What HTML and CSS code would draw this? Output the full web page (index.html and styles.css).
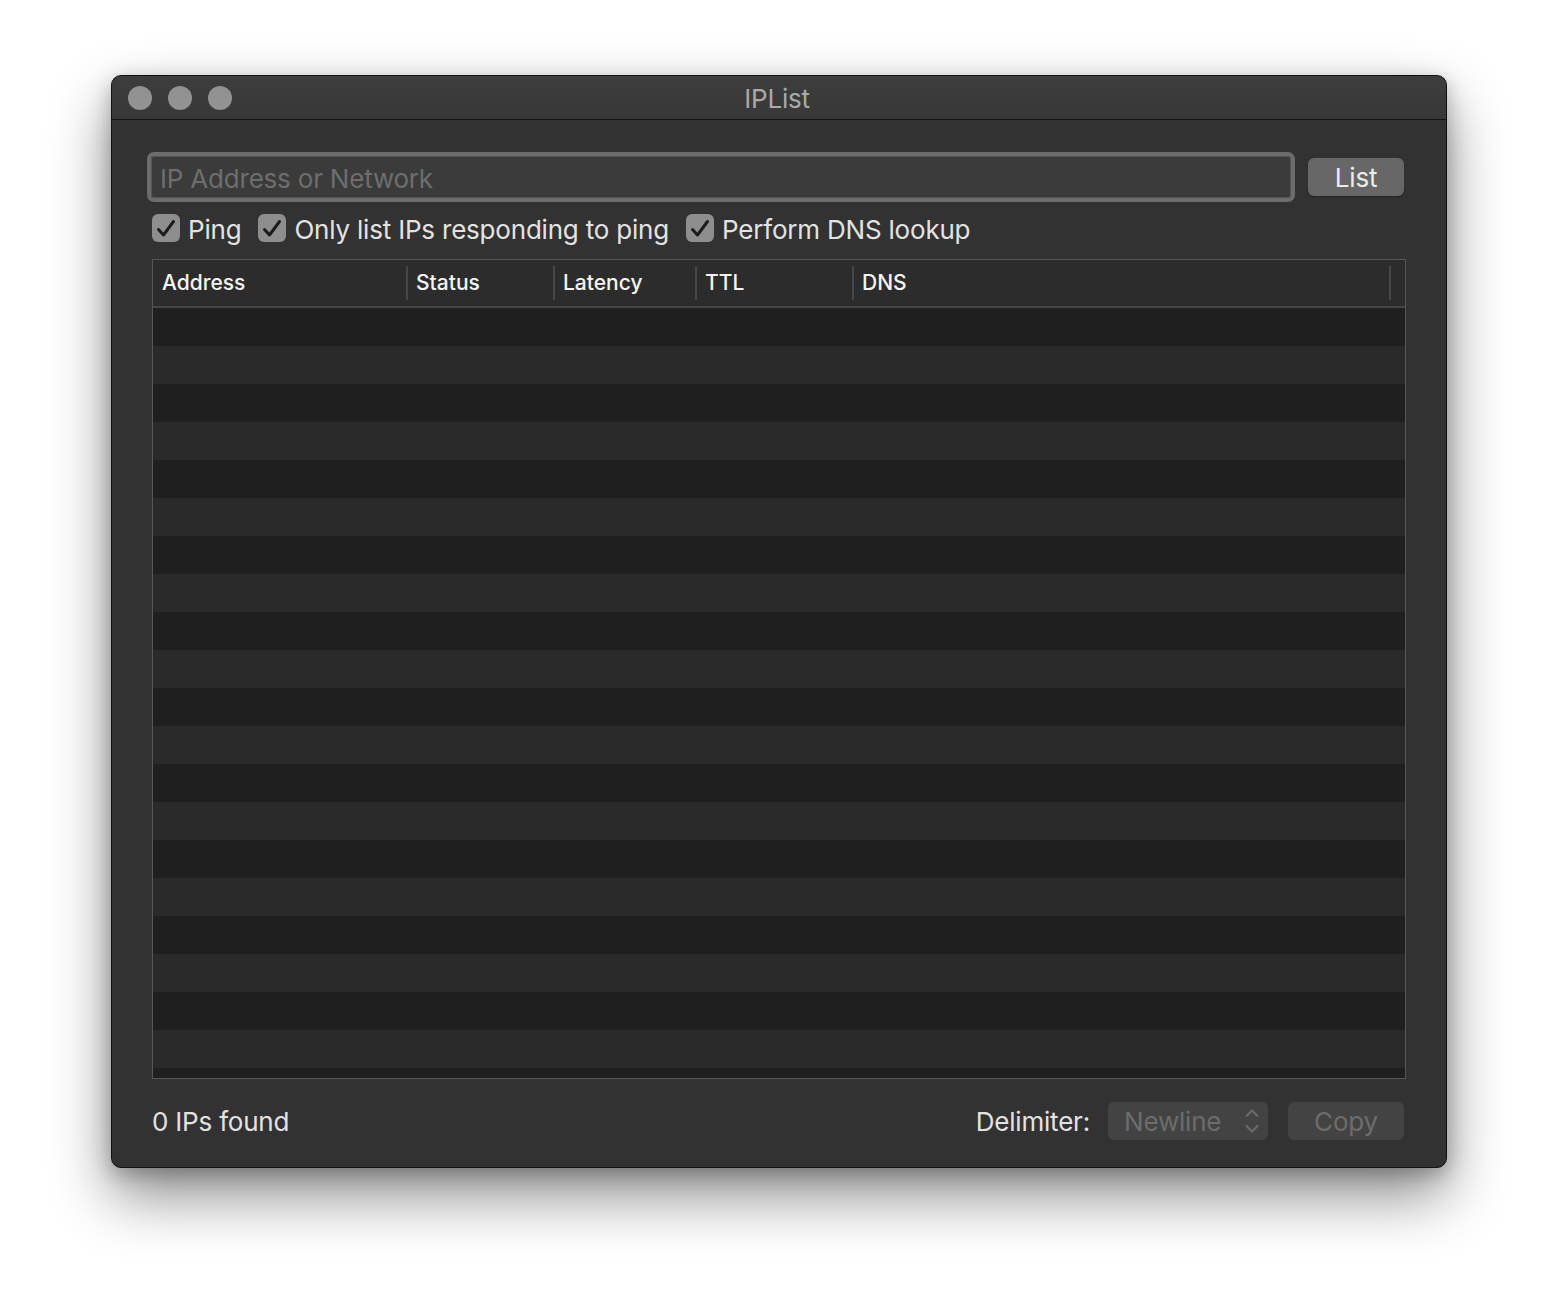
FILE: index.html
```html
<!DOCTYPE html>
<html>
<head>
<meta charset="utf-8">
<title>IPList</title>
<link rel="stylesheet" href="styles.css">
</head>
<body>
<div class="stage">
  <div class="window">
    <div class="titlebar">
      <div class="lights">
        <span class="light"></span><span class="light"></span><span class="light"></span>
      </div>
      <div class="title">IPList</div>
    </div>
    <div class="content">
      <div class="input-row">
        <div class="field"><span class="placeholder">IP Address or Network</span></div>
        <div class="btn btn-list">List</div>
      </div>
      <div class="checks">
        <label class="check"><span class="box"><svg viewBox="0 0 28 28" width="28" height="28"><path d="M6.5 15.5 L11.5 21 L21.5 7.5" fill="none" stroke="#1c1c1c" stroke-width="3" stroke-linecap="round" stroke-linejoin="round"/></svg></span><span class="label">Ping</span></label>
        <label class="check"><span class="box"><svg viewBox="0 0 28 28" width="28" height="28"><path d="M6.5 15.5 L11.5 21 L21.5 7.5" fill="none" stroke="#1c1c1c" stroke-width="3" stroke-linecap="round" stroke-linejoin="round"/></svg></span><span class="label">Only list IPs responding to ping</span></label>
        <label class="check"><span class="box"><svg viewBox="0 0 28 28" width="28" height="28"><path d="M6.5 15.5 L11.5 21 L21.5 7.5" fill="none" stroke="#1c1c1c" stroke-width="3" stroke-linecap="round" stroke-linejoin="round"/></svg></span><span class="label">Perform DNS lookup</span></label>
      </div>
      <div class="table">
        <div class="thead">
          <div class="th c-address">Address</div>
          <div class="th c-status">Status</div>
          <div class="th c-latency">Latency</div>
          <div class="th c-ttl">TTL</div>
          <div class="th c-dns">DNS</div>
          <div class="th c-end"></div>
        </div>
        <div class="tbody"></div>
      </div>
      <div class="footer">
        <div class="count">0 IPs found</div>
        <div class="footer-right">
          <span class="delim">Delimiter:</span>
          <div class="popup"><span>Newline</span>
            <svg class="chev" viewBox="0 0 16 28" width="16" height="28"><path d="M2.5 9 L8 3.5 L13.5 9" fill="none" stroke="#6a6a6a" stroke-width="2.2" stroke-linecap="round" stroke-linejoin="round"/><path d="M2.5 19 L8 24.5 L13.5 19" fill="none" stroke="#6a6a6a" stroke-width="2.2" stroke-linecap="round" stroke-linejoin="round"/></svg>
          </div>
          <div class="btn btn-copy">Copy</div>
        </div>
      </div>
    </div>
  </div>
</div>
</body>
</html>
```

FILE: styles.css
```css
html, body {
  margin: 0;
  padding: 0;
  background: #ffffff;
}
body {
  width: 1558px;
  height: 1316px;
  overflow: hidden;
  font-family: Inter, "Liberation Sans", sans-serif;
  letter-spacing: -0.2px;
}
.stage {
  padding: 75px 0 0 111px;
}
.window {
  width: 1334px;
  height: 1091px;
  border: 1px solid #111;
  border-radius: 10px;
  background: #323232;
  box-shadow: 0 28px 60px rgba(0,0,0,0.45), 0 6px 20px rgba(0,0,0,0.25);
  overflow: hidden;
  display: flex;
  flex-direction: column;
}
.titlebar {
  height: 43px;
  border-bottom: 1px solid #131313;
  background: linear-gradient(#3d3d3d, #383838);
  display: flex;
  align-items: center;
  position: relative;
}
.lights {
  display: flex;
  gap: 16px;
  padding-left: 16px;
}
.light {
  width: 24px;
  height: 24px;
  border-radius: 50%;
  background: #929292;
}
.title {
  position: absolute;
  left: 0;
  right: 0;
  top: 2px;
  bottom: 0;
  display: flex;
  align-items: center;
  justify-content: center;
  color: #a9a9a9;
  font-size: 26px;
  padding-right: 4px;
  pointer-events: none;
}
.content {
  flex: 1;
  padding: 32px 40px 0 40px;
  display: flex;
  flex-direction: column;
}
.input-row {
  display: flex;
  align-items: center;
  height: 50px;
}
.field {
  flex: 1;
  margin-left: -5px;
  height: 50px;
  box-sizing: border-box;
  border: 4px solid #6c6c6c;
  border-radius: 7px;
  background: #3b3b3b;
  box-shadow: inset 0 0 0 1px #555;
  display: flex;
  align-items: center;
  padding-left: 9px;
  padding-top: 2px;
}
.placeholder {
  color: #6e6e6e;
  font-size: 26px;
}
.btn {
  height: 38px;
  border-radius: 6px;
  display: flex;
  align-items: center;
  justify-content: center;
  font-size: 26px;
  box-sizing: border-box;
}
.btn-list {
  width: 96px;
  margin-left: 13px;
  margin-right: 2px;
  background: #676767;
  color: #ececec;
  box-shadow: 0 1px 1px rgba(0,0,0,0.3);
}
.checks {
  display: flex;
  margin-top: 12px;
  height: 28px;
  align-items: center;
}
.check {
  display: flex;
  align-items: center;
  margin-right: 17px;
}
.box {
  width: 28px;
  height: 28px;
  border-radius: 6px;
  background: #8e8e8e;
  display: block;
}
.box svg { display: block; }
.label {
  margin-left: 8px;
  padding-top: 2px;
  color: #e3e3e3;
  font-size: 26px;
}
.table {
  margin-top: 17px;
  border: 1px solid #575757;
  height: 818px;
  display: flex;
  flex-direction: column;
}
.thead {
  height: 46px;
  flex: none;
  background: #2c2c2c;
  border-bottom: 2px solid #474747;
  display: flex;
  align-items: center;
}
.th {
  height: 34px;
  display: flex;
  align-items: center;
  box-sizing: border-box;
  padding-left: 8px;
  padding-bottom: 2px;
  color: #f4f4f4;
  font-size: 21px;
  font-weight: 500;
  letter-spacing: 0;
  border-right: 2px solid #474747;
}
.c-address { width: 255px; padding-left: 9px; }
.c-status { width: 147px; }
.c-latency { width: 142px; }
.c-ttl { width: 157px; }
.c-dns { width: 537px; }
.c-end { flex: 1; border-right: none; }
.tbody {
  flex: 1;
  background: repeating-linear-gradient(#1f1f1f 0, #1f1f1f 38px, #2a2a2a 38px, #2a2a2a 76px);
}
.footer {
  margin-top: 23px;
  height: 38px;
  display: flex;
  align-items: center;
  justify-content: space-between;
}
.count {
  color: #e3e3e3;
  font-size: 26px;
}
.footer-right {
  display: flex;
  align-items: center;
  margin-right: 2px;
}
.delim {
  color: #e3e3e3;
  font-size: 26px;
  margin-right: 18px;
}
.popup {
  width: 160px;
  height: 38px;
  border-radius: 6px;
  background: #434343;
  box-sizing: border-box;
  padding: 0 8px 0 16px;
  display: flex;
  align-items: center;
  justify-content: space-between;
  color: #6c6c6c;
  font-size: 26px;
}
.chev { display: block; }
.btn-copy {
  width: 116px;
  margin-left: 20px;
  background: #434343;
  color: #6c6c6c;
}
```
